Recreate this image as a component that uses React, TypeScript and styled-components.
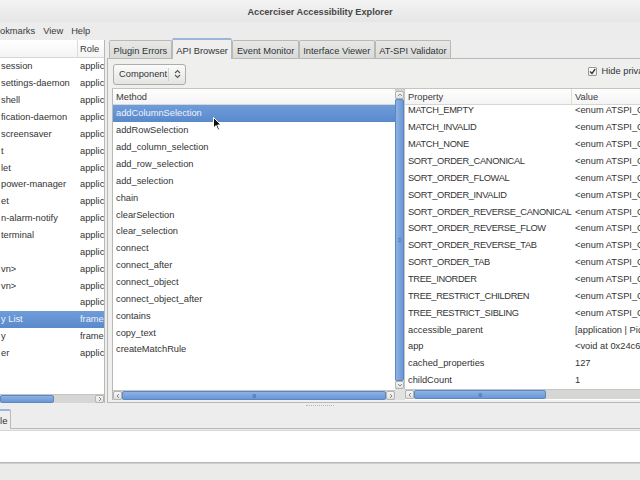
import styled, { createGlobalStyle } from 'styled-components';

const GlobalStyle = createGlobalStyle`
  html, body {
    margin: 0;
    padding: 0;
    width: 640px;
    height: 480px;
    overflow: hidden;
    background: #ededed;
  }
  * {
    box-sizing: border-box;
  }
`;

const ROW_H = 16.87;

const Window = styled.div`
  width: 640px;
  height: 480px;
  display: flex;
  flex-direction: column;
  font-family: 'Liberation Sans', Arial, sans-serif;
  font-size: 9.3px;
  color: #2e3436;
  background: #ededed;
  overflow: hidden;
  position: relative;
`;

const TitleBar = styled.div`
  height: 22px;
  display: flex;
  align-items: center;
  justify-content: center;
  background: linear-gradient(#f3f3f3, #e6e6e6);
  font-weight: bold;
  font-size: 9.2px;
  color: #474747;
  padding-top: 1px;
`;

const MenuBar = styled.div`
  height: 18px;
  display: flex;
  align-items: center;
  gap: 8px;
  background: #ececec;
  font-size: 9.3px;
  color: #3a3a3a;
`;

const Main = styled.div`
  height: 363px;
  display: flex;
`;

/* ---------- left tree ---------- */

const LeftPane = styled.div`
  width: 105px;
  display: flex;
  flex-direction: column;
  border-right: 1px solid #b8b8b6;
  background: #fff;
`;

const TreeBox = styled.div`
  flex: 1;
  overflow: hidden;
  background: #fff;
`;

const HeaderRow = styled.div<{ $h?: number }>`
  height: ${(p) => p.$h ?? 18}px;
  flex: none;
  display: flex;
  align-items: center;
  border-bottom: 1px solid #d6d6d4;
  background: linear-gradient(#ffffff, #f4f4f4);
  white-space: nowrap;
  color: #3a3a3a;
`;

const HeaderCell = styled.div<{ $w?: number; $sep?: boolean; $pad?: number }>`
  ${(p) => (p.$w ? `width: ${p.$w}px; flex: none;` : 'flex: 1;')}
  height: 100%;
  display: flex;
  align-items: center;
  padding-left: ${(p) => p.$pad ?? 3}px;
  overflow: hidden;
  border-right: ${(p) => (p.$sep ? '1px solid #dcdcda' : 'none')};
`;

const Row = styled.div<{ $selected?: boolean }>`
  height: ${ROW_H}px;
  display: flex;
  align-items: center;
  white-space: nowrap;
  background: ${(p) => (p.$selected ? 'linear-gradient(#6f9dda, #5a89cc)' : 'transparent')};
  color: ${(p) => (p.$selected ? '#eef3fb' : '#333')};
`;

const Cell = styled.div<{ $w?: number; $pad?: number; $tight?: boolean }>`
  ${(p) => (p.$w ? `width: ${p.$w}px; flex: none;` : 'flex: 1;')}
  padding-left: ${(p) => p.$pad ?? 3}px;
  overflow: hidden;
  line-height: 12px;
  letter-spacing: ${(p) => (p.$tight ? '-0.36px' : 'normal')};
`;

/* ---------- scrollbars ---------- */

const HScroll = styled.div<{ $h?: number }>`
  height: ${(p) => p.$h ?? 10}px;
  flex: none;
  display: flex;
  align-items: stretch;
  background: #d4d4d2;
  border-top: 1px solid #c4c4c2;
`;

const ArrowBtn = styled.div`
  width: 9px;
  flex: none;
  display: flex;
  align-items: center;
  justify-content: center;
  background: linear-gradient(#f6f6f6, #e2e2e2);
  border: 1px solid #b4b4b2;
  border-radius: 2px;
  color: #777;
  font-size: 6px;
  line-height: 1;
`;

const Thumb = styled.div<{ $vertical?: boolean }>`
  display: flex;
  align-items: center;
  justify-content: center;
  background: ${(p) =>
    p.$vertical
      ? 'linear-gradient(90deg, #8db2e4, #6b97d6)'
      : 'linear-gradient(#8db2e4, #6b97d6)'};
  border: 1px solid #5d86c4;
  border-radius: 2px;
  color: #3d68a8;
  font-size: 6px;
  letter-spacing: -0.5px;
`;

const Trough = styled.div`
  flex: 1;
  background: #d6d6d4;
`;

const VScroll = styled.div`
  width: 10px;
  display: flex;
  flex-direction: column;
  background: #d4d4d2;
  padding-top: 2px;
  border-right: 1px solid #c4c4c2;
`;

const Chevron = ({ dir }: { dir: 'l' | 'r' | 'u' | 'd' }) => {
  const d = {
    l: 'M4 1 L2 3 L4 5',
    r: 'M2 1 L4 3 L2 5',
    u: 'M1 4 L3 2 L5 4',
    d: 'M1 2 L3 4 L5 2',
  }[dir];
  return (
    <svg width="6" height="6" viewBox="0 0 6 6">
      <path d={d} fill="none" stroke="#8a8a8a" strokeWidth="1" />
    </svg>
  );
};

/* ---------- notebook ---------- */

const Notebook = styled.div`
  flex: 1;
  display: flex;
  flex-direction: column;
  margin-left: 2px;
  min-width: 0;
`;

const TabRow = styled.div`
  height: 19px;
  display: flex;
  align-items: flex-end;
  padding-left: 2px;
  border-bottom: 1px solid #b8b8b6;
`;

const Tab = styled.div<{ $active?: boolean }>`
  height: ${(p) => (p.$active ? 21 : 18)}px;
  padding: 0 3.5px;
  display: flex;
  align-items: center;
  white-space: nowrap;
  border: 1px solid #b8b8b6;
  border-bottom: none;
  border-radius: 2px 2px 0 0;
  margin-bottom: ${(p) => (p.$active ? -1 : 0)}px;
  background: ${(p) => (p.$active ? '#efefee' : 'linear-gradient(#e8e8e7, #dadad8)')};
  border-top: ${(p) => (p.$active ? '2px solid #9bb6d8' : '1px solid #b8b8b6')};
  color: #2e3436;
  padding-top: ${(p) => (p.$active ? 2 : 3)}px;
`;

const Page = styled.div`
  flex: 1;
  display: flex;
  flex-direction: column;
  border-left: 1px solid #b8b8b6;
  border-bottom: 1px solid #b8b8b6;
  padding: 0 0 2px 4px;
  background: #efefee;
  min-height: 0;
`;

const Toolbar = styled.div`
  height: 29px;
  flex: none;
  display: flex;
  align-items: center;
  justify-content: space-between;
  padding: 1px 0 0 1px;
`;

const Combo = styled.div`
  width: 73px;
  height: 21px;
  display: flex;
  align-items: center;
  border: 1px solid #adadab;
  border-radius: 3px;
  background: linear-gradient(#fbfbfb, #e4e4e3);
  color: #2e3436;
`;

const ComboLabel = styled.span`
  flex: 1;
  padding-left: 5px;
`;

const ComboIcon = styled.span`
  width: 17px;
  height: 13px;
  display: flex;
  align-items: center;
  justify-content: center;
  border-left: 1px solid #cfcfcd;
`;

const CheckLabel = styled.label`
  display: flex;
  align-items: center;
  gap: 5px;
  white-space: nowrap;
  margin-right: -52px;
  margin-top: -6px;
`;

const CheckBox = styled.span`
  width: 9px;
  height: 9px;
  display: flex;
  align-items: center;
  justify-content: center;
  border: 1px solid #9a9a98;
  border-radius: 1px;
  background: linear-gradient(#ffffff, #ececea);
`;

const Paned = styled.div`
  flex: 1;
  display: flex;
  min-height: 0;
  border-top: 1px solid #c4c4c2;
`;

const MethodPane = styled.div`
  width: 283px;
  flex: none;
  display: flex;
  flex-direction: column;
  border-left: 1px solid #b8b8b6;
  background: #fff;
`;

const PropertyPane = styled.div`
  flex: 1;
  display: grid;
  grid-template-columns: 10px 1fr;
  grid-template-rows: 1fr 11px;
  min-width: 0;
  background: #fff;
`;

const PropTree = styled.div`
  display: flex;
  flex-direction: column;
  overflow: hidden;
  min-width: 0;
`;

const ScrolledBody = styled.div<{ $offset: number }>`
  flex: 1;
  overflow: hidden;
  & > div:first-child {
    margin-top: ${(p) => -p.$offset}px;
  }
`;

const Corner = styled.div`
  background: #e2e2e0;
`;

/* ---------- bottom ---------- */

const Bottom = styled.div`
  flex: 1;
  display: flex;
  flex-direction: column;
`;

const Handle = styled.div`
  height: 5px;
  display: flex;
  justify-content: center;
  align-items: center;
`;

const Dots = styled.div`
  width: 28px;
  height: 1px;
  border-top: 1px dotted #b5b5b3;
`;

const BottomTabs = styled.div`
  height: 21px;
  display: flex;
  align-items: flex-end;
  border-bottom: 1px solid #b8b8b6;
`;

const SmallTab = styled.div`
  height: 20px;
  padding: 0 3px 0 0;
  display: flex;
  align-items: center;
  border: 1px solid #b8b8b6;
  border-left: none;
  border-top: 2px solid #9bb6d8;
  border-bottom: none;
  border-radius: 0 2px 0 0;
  margin-bottom: -1px;
  background: #efefee;
  font-size: 9.6px;
`;

const Console = styled.div`
  height: 33px;
  background: #fff;
  border-top: 1px solid #d6d6d4;
  border-bottom: 1px solid #b8b8b6;
  margin-top: 1px;
`;

const StatusBar = styled.div`
  flex: 1;
  background: #ebebea;
  border-top: 1px solid #d0d0ce;
`;

const Cursor = styled.svg`
  position: absolute;
  left: 213px;
  top: 117px;
`;

const leftRows: [string, string][] = [
  ['session', 'application'],
  ['settings-daemon', 'application'],
  ['shell', 'application'],
  ['fication-daemon', 'application'],
  ['screensaver', 'application'],
  ['t', 'application'],
  ['let', 'application'],
  ['power-manager', 'application'],
  ['et', 'application'],
  ['n-alarm-notify', 'application'],
  ['terminal', 'application'],
  ['', 'application'],
  ['vn>', 'application'],
  ['vn>', 'application'],
  ['', 'application'],
  ['y List', 'frame'],
  ['y', 'frame'],
  ['er', 'application'],
];

const methods = [
  'addColumnSelection',
  'addRowSelection',
  'add_column_selection',
  'add_row_selection',
  'add_selection',
  'chain',
  'clearSelection',
  'clear_selection',
  'connect',
  'connect_after',
  'connect_object',
  'connect_object_after',
  'contains',
  'copy_text',
  'createMatchRule',
];

const ENUM = '<enum ATSPI_COLLECTION_MATCH_TYPE>';
const properties: [string, string][] = [
  ['MATCH_EMPTY', ENUM],
  ['MATCH_INVALID', ENUM],
  ['MATCH_NONE', ENUM],
  ['SORT_ORDER_CANONICAL', ENUM],
  ['SORT_ORDER_FLOWAL', ENUM],
  ['SORT_ORDER_INVALID', ENUM],
  ['SORT_ORDER_REVERSE_CANONICAL', ENUM],
  ['SORT_ORDER_REVERSE_FLOW', ENUM],
  ['SORT_ORDER_REVERSE_TAB', ENUM],
  ['SORT_ORDER_TAB', ENUM],
  ['TREE_INORDER', ENUM],
  ['TREE_RESTRICT_CHILDREN', ENUM],
  ['TREE_RESTRICT_SIBLING', ENUM],
  ['accessible_parent', '[application | Pidgin]'],
  ['app', '<void at 0x24c6f40>'],
  ['cached_properties', '127'],
  ['childCount', '1'],
];

const tabs = ['Plugin Errors', 'API Browser', 'Event Monitor', 'Interface Viewer', 'AT-SPI Validator'];

const App = () => {
  return (
    <Window>
      <GlobalStyle />
      <TitleBar>Accerciser Accessibility Explorer</TitleBar>
      <MenuBar>
        <span>okmarks</span>
        <span>View</span>
        <span>Help</span>
      </MenuBar>

      <Main>
        <LeftPane>
          <TreeBox>
            <HeaderRow>
              <HeaderCell $w={78} $sep />
              <HeaderCell $pad={2}>Role</HeaderCell>
            </HeaderRow>
            {leftRows.map(([name, role], i) => (
              <Row key={i} $selected={i === 15}>
                <Cell $w={79} $pad={1}>{name}</Cell>
                <Cell $pad={1}>{role}</Cell>
              </Row>
            ))}
          </TreeBox>
          <HScroll $h={9}>
            <Thumb style={{ width: 54 }} />
            <Trough />
            <ArrowBtn>
              <Chevron dir="r" />
            </ArrowBtn>
          </HScroll>
        </LeftPane>

        <Notebook>
          <TabRow>
            {tabs.map((t) => (
              <Tab key={t} $active={t === 'API Browser'}>
                {t}
              </Tab>
            ))}
          </TabRow>
          <Page>
            <Toolbar>
              <Combo>
                <ComboLabel>Component</ComboLabel>
                <ComboIcon>
                  <svg width="7" height="10" viewBox="0 0 7 10">
                    <path d="M1 4 L3.5 1.5 L6 4 M1 6 L3.5 8.5 L6 6" fill="none" stroke="#555" strokeWidth="1.1" />
                  </svg>
                </ComboIcon>
              </Combo>
              <CheckLabel>
                <CheckBox>
                  <svg width="7" height="7" viewBox="0 0 7 7">
                    <path d="M1 3.5 L3 5.5 L6.2 1" fill="none" stroke="#333" strokeWidth="1.3" />
                  </svg>
                </CheckBox>
                Hide private attributes
              </CheckLabel>
            </Toolbar>

            <Paned>
              <MethodPane>
                <HeaderRow $h={16}>
                  <HeaderCell>Method</HeaderCell>
                </HeaderRow>
                <TreeBox>
                  {methods.map((m, i) => (
                    <Row key={m} $selected={i === 0}>
                      <Cell>{m}</Cell>
                    </Row>
                  ))}
                </TreeBox>
                <HScroll>
                  <ArrowBtn>
                    <Chevron dir="l" />
                  </ArrowBtn>
                  <Thumb style={{ flex: 1 }}>III</Thumb>
                  <ArrowBtn>
                    <Chevron dir="r" />
                  </ArrowBtn>
                </HScroll>
              </MethodPane>

              <PropertyPane>
                <VScroll>
                  <ArrowBtn style={{ width: 'auto', height: 8 }}>
                    <Chevron dir="u" />
                  </ArrowBtn>
                  <Thumb $vertical style={{ flex: 1 }}>≡</Thumb>
                  <ArrowBtn style={{ width: 'auto', height: 8 }}>
                    <Chevron dir="d" />
                  </ArrowBtn>
                </VScroll>
                <PropTree>
                  <HeaderRow $h={16}>
                    <HeaderCell $w={167} $sep>Property</HeaderCell>
                    <HeaderCell>Value</HeaderCell>
                  </HeaderRow>
                  <ScrolledBody $offset={3}>
                    {properties.map(([k, v]) => (
                      <Row key={k}>
                        <Cell $w={167} $tight={k === k.toUpperCase()}>{k}</Cell>
                        <Cell>{v}</Cell>
                      </Row>
                    ))}
                  </ScrolledBody>
                </PropTree>
                <Corner />
                <HScroll>
                  <ArrowBtn>
                    <Chevron dir="l" />
                  </ArrowBtn>
                  <Thumb style={{ width: 132 }}>III</Thumb>
                  <Trough />
                </HScroll>
              </PropertyPane>
            </Paned>
          </Page>
        </Notebook>
      </Main>

      <Bottom>
        <Handle>
          <Dots />
        </Handle>
        <BottomTabs>
          <SmallTab>le</SmallTab>
        </BottomTabs>
        <Console />
        <StatusBar />
      </Bottom>

      <Cursor width="9" height="14" viewBox="0 0 9 14">
        <path d="M0.5 0.5 L0.5 11 L3 8.5 L5 13 L6.5 12.3 L4.6 8 L8 8 Z" fill="#111" stroke="#fff" strokeWidth="1" />
      </Cursor>
    </Window>
  );
};

export default App;
